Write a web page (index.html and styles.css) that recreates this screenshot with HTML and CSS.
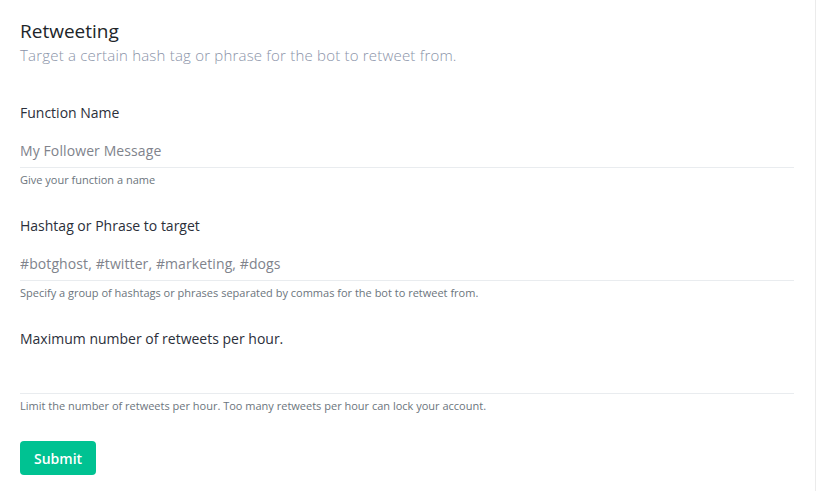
FILE: index.html
```html
<!DOCTYPE html>
<html lang="en">
<head>
    <meta charset="UTF-8">
    <meta name="viewport" content="width=device-width, initial-scale=1.0">
    <title>Retweeting</title>
    <link rel="stylesheet" href="styles.css">
</head>
<body>
    <div class="card">
        <div class="card-head">
            <h4 class="card-title">Retweeting</h4>
            <p class="card-subtitle">Target a certain hash tag or phrase for the bot to retweet from.</p>
        </div>
        <form>
            <div class="form-group">
                <label for="fname">Function Name</label>
                <input type="text" id="fname" placeholder="My Follower Message">
                <small class="form-text">Give your function a name</small>
            </div>
            <div class="form-group">
                <label for="tags">Hashtag or Phrase to target</label>
                <input type="text" id="tags" placeholder="#botghost, #twitter, #marketing, #dogs">
                <small class="form-text">Specify a group of hashtags or phrases separated by commas for the bot to retweet from.</small>
            </div>
            <div class="form-group">
                <label for="max">Maximum number of retweets per hour.</label>
                <input type="number" id="max">
                <small class="form-text">Limit the number of retweets per hour. Too many retweets per hour can lock your account.</small>
            </div>
            <button type="submit" class="btn-submit">Submit</button>
        </form>
    </div>
</body>
</html>
```

FILE: styles.css
```css
html, body {
    height: 100%;
}
body {
    margin: 0;
    font-family: "Open Sans", "DejaVu Sans", sans-serif;
    background-color: #fff;
    color: #343a40;
}
.card {
    box-sizing: border-box;
    width: 816px;
    height: 100%;
    padding: 20px;
    padding-right: 21px;
    border-right: 1px solid #ebebeb;
    background-color: #fff;
}
.card-head {
    margin-bottom: 36px;
}
.card-title {
    margin: 0;
    font-size: 19px;
    line-height: 22px;
    font-weight: 500;
    color: #212529;
}
.card-subtitle {
    margin: 3px 0 0;
    font-size: 15px;
    line-height: 21px;
    letter-spacing: 0.2px;
    font-weight: 300;
    color: #8a93a8;
}
.form-group {
    display: flex;
    flex-direction: column;
    margin-bottom: 27px;
}
label {
    font-size: 14px;
    line-height: 21px;
    margin-bottom: 10px;
    color: #2b2f3a;
}
input {
    box-sizing: border-box;
    height: 35px;
    padding: 0;
    border: none;
    border-bottom: 1px solid #e9ecef;
    font-family: inherit;
    font-size: 14px;
    letter-spacing: 0.1px;
    color: #4f5467;
    outline: none;
}
input::placeholder {
    color: #80838c;
}
.form-text {
    margin-top: 4px;
    font-size: 11px;
    line-height: 16px;
    color: #6c757d;
}
.btn-submit {
    height: 34px;
    padding: 0 14px;
    border: none;
    border-radius: 4px;
    background-color: #00c292;
    color: #fff;
    font-family: inherit;
    font-size: 14px;
    font-weight: 600;
    cursor: pointer;
}
```
